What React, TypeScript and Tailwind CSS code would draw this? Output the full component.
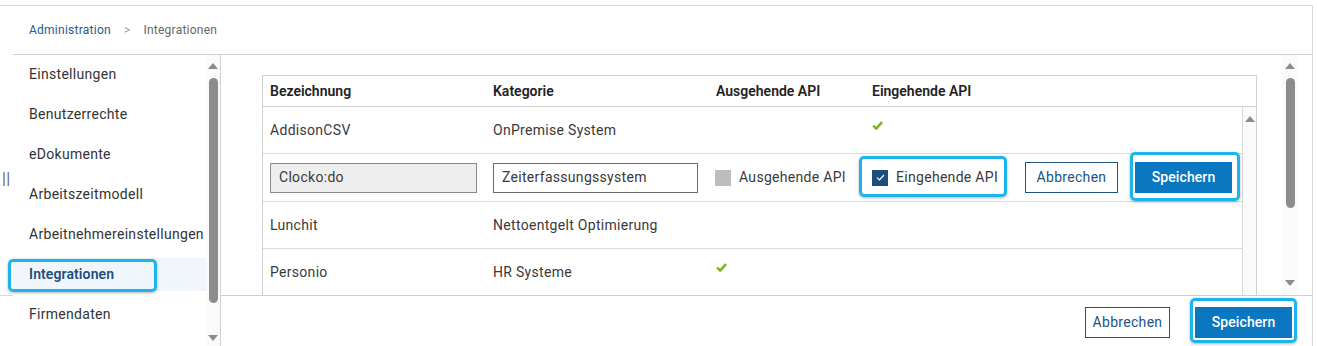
import type { ReactNode } from "react"

const navItems = [
  "Einstellungen",
  "Benutzerrechte",
  "eDokumente",
  "Arbeitszeitmodell",
  "Arbeitnehmereinstellungen",
  "Integrationen",
  "Firmendaten",
]

function Focus({ className }: { className: string }) {
  return (
    <span
      className={`pointer-events-none absolute rounded-[5px] border-[3px] border-[#1db4ec] shadow-[0_1px_3px_rgba(0,0,0,0.3)] ${className}`}
    />
  )
}

function ArrowUp() {
  return <span className="h-0 w-0 border-x-[5px] border-b-[6px] border-x-transparent border-b-[#8c8c8c]" />
}

function ArrowDown() {
  return <span className="h-0 w-0 border-x-[5px] border-t-[6px] border-x-transparent border-t-[#8c8c8c]" />
}

function Check() {
  return (
    <svg width="11" height="9" viewBox="0 0 11 9" className="mb-[9px]">
      <path d="M1.2 4.6 L4.2 7.6 L10 1.2" fill="none" stroke="#7db51c" strokeWidth="2.6" strokeLinejoin="round" />
    </svg>
  )
}

function Row({ cells, className = "h-[47px]" }: { cells: ReactNode[]; className?: string }) {
  return (
    <div className={`flex items-center border-b border-[#dadada] pl-[7px] ${className}`}>
      <div className="flex h-full w-[223px] shrink-0 items-center">{cells[0]}</div>
      <div className="flex h-full w-[223px] shrink-0 items-center">{cells[1]}</div>
      <div className="flex h-full w-[156px] shrink-0 items-center">{cells[2]}</div>
      <div className="flex h-full flex-1 items-center">{cells[3]}</div>
    </div>
  )
}

export default function App() {
  return (
    <div className="relative h-[346px] w-[1317px] overflow-hidden bg-white font-[Roboto,sans-serif] text-[14px] tracking-[0.3px] text-[#3a3a3a]">
      <div className="mt-[5px] flex h-[341px] w-[1313px] flex-col border-t border-r border-[#d9d9d9]">
        {/* breadcrumb */}
        <div className="ml-[13px] flex h-[49px] shrink-0 items-center border-b border-[#d0d0d0] pl-4 text-[12px] tracking-[0.25px]">
          <span className="text-[#1f5a89]">Administration</span>
          <span className="mx-[13px] text-[#a0a0a0]">&gt;</span>
          <span className="text-[#666]">Integrationen</span>
        </div>

        <div className="flex min-h-0 flex-1">
          {/* gutter */}
          <div className="w-[13px] shrink-0">
            <div className="h-[241px] border-b border-[#d9d9d9] pl-[2px] pt-[116px] text-[16px] leading-none text-[#666]">
              ||
            </div>
          </div>

          {/* sidebar */}
          <div className="flex w-[208px] shrink-0 border-r border-[#d0d0d0]">
            <div className="-mt-px w-[193px] shrink-0">
              {navItems.map((item) => {
                const active = item === "Integrationen"
                return (
                  <div key={item} className="flex h-10 items-center">
                    <div
                      className={`relative flex h-[33px] w-full items-center whitespace-nowrap pl-4 ${
                        active ? "bg-[#f0f6fb] font-semibold tracking-[0.1px] text-[#1d4f7c]" : "text-[#333]"
                      }`}
                    >
                      {item}
                      {active ? <Focus className="-left-[5px] right-[49px] top-[1px] -bottom-px" /> : null}
                    </div>
                  </div>
                )
              })}
            </div>
            <div className="flex w-[14px] shrink-0 flex-col items-center bg-[#fafafa] pb-[5px] pt-[8px]">
              <ArrowUp />
              <div className="mt-[9px] h-[225px] w-[9px] rounded-full bg-[#8c8c8c]" />
              <div className="flex-1" />
              <ArrowDown />
            </div>
          </div>

          {/* main */}
          <div className="flex min-w-0 flex-1 flex-col">
            <div className="flex h-[240px] shrink-0 overflow-hidden">
              <div className="pl-[41px] pt-[20px]">
                <div className="w-[995px] border border-[#d0d0d0]">
                  <div className="flex h-[31px] items-center border-b border-[#d0d0d0] pl-[7px] font-semibold tracking-normal text-[#222]">
                    <div className="w-[223px] shrink-0">Bezeichnung</div>
                    <div className="w-[223px] shrink-0">Kategorie</div>
                    <div className="w-[156px] shrink-0">Ausgehende API</div>
                    <div className="flex-1">Eingehende API</div>
                  </div>
                  <div className="flex">
                    <div className="w-[980px] shrink-0 border-r border-[#d9d9d9]">
                      <Row cells={["AddisonCSV", "OnPremise System", null, <Check />]} />
                      <Row
                        className="h-[48px]"
                        cells={[
                          <div className="flex h-[30px] w-[207px] items-center border border-[#8a8a8a] bg-[#eeeeee] px-[8px]">
                            Clocko:do
                          </div>,
                          <div className="flex h-[30px] w-[205px] items-center border border-[#6b6b6b] bg-white px-[8px]">
                            Zeiterfassungssystem
                          </div>,
                          <div className="-ml-px flex items-center gap-[8px]">
                            <span className="h-4 w-4 shrink-0 bg-[#bdbdbd]" />
                            <span className="whitespace-nowrap">Ausgehende API</span>
                          </div>,
                          <div className="flex w-full items-center pr-[10px]">
                            <div className="relative flex h-4 w-[126px] shrink-0 items-center gap-[8px]">
                              <span className="flex h-4 w-4 shrink-0 items-center justify-center bg-[#1d4e7c]">
                                <svg width="9" height="7" viewBox="0 0 9 7">
                                  <path d="M1 3.6 L3.4 6 L8 1" fill="none" stroke="#fff" strokeWidth="1.2" />
                                </svg>
                              </span>
                              <span className="whitespace-nowrap">Eingehende API</span>
                              <Focus className="-left-[13px] -right-[9px] -top-[14px] -bottom-[11px]" />
                            </div>
                            <div className="ml-auto flex items-center gap-[17px]">
                              <button className="h-[31px] w-[93px] border border-[#1e5380] bg-white text-[#1e5380]">
                                Abbrechen
                              </button>
                              <div className="relative">
                                <button className="h-[31px] w-[97px] bg-[#0b77c0] font-medium tracking-[0.1px] text-white">
                                  Speichern
                                </button>
                                <Focus className="-left-[5px] -right-[8px] -top-[10px] -bottom-[8px]" />
                              </div>
                            </div>
                          </div>,
                        ]}
                      />
                      <Row cells={["Lunchit", "Nettoentgelt Optimierung", null, null]} />
                      <Row cells={["Personio", "HR Systeme", <Check />, null]} />
                    </div>
                    <div className="flex w-[13px] shrink-0 flex-col items-center bg-[#fafafa] pt-[9px]">
                      <ArrowUp />
                    </div>
                  </div>
                </div>
              </div>
              <div className="ml-[25px] flex w-[16px] shrink-0 flex-col items-center bg-[#fafafa] pb-[9px] pt-[8px]">
                <ArrowUp />
                <div className="mt-[9px] h-[130px] w-[9px] rounded-full bg-[#8c8c8c]" />
                <div className="flex-1" />
                <ArrowDown />
              </div>
            </div>

            {/* footer */}
            <div className="flex flex-1 items-center justify-end gap-[25px] border-t border-[#d0d0d0] pr-[20px] pt-[3px]">
              <button className="h-[31px] w-[85px] border border-[#1e5380] bg-white text-[#1e5380]">Abbrechen</button>
              <div className="relative">
                <button className="h-[31px] w-[97px] bg-[#0b77c0] font-medium tracking-[0.1px] text-white">
                  Speichern
                </button>
                <Focus className="-left-[5px] -right-[5px] -top-[9px] -bottom-[5px]" />
              </div>
            </div>
          </div>
        </div>
      </div>
    </div>
  )
}
